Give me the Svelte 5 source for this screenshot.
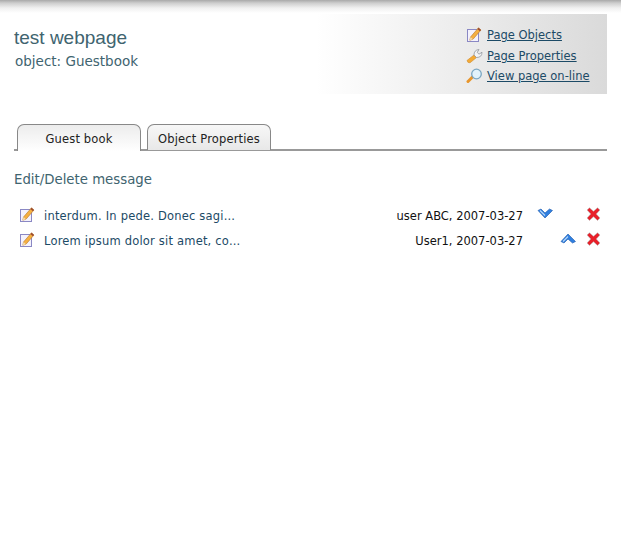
<script>
  let messages = [
    { text: 'interdum. In pede. Donec sagi...', by: 'user ABC, 2007-03-27', move: 'down' },
    { text: 'Lorem ipsum dolor sit amet, co...', by: 'User1, 2007-03-27', move: 'up' }
  ];
</script>

{#snippet pencil()}
  <svg class="icon" width="16" height="16" viewBox="0 0 16 16">
    <rect x="1.5" y="2.5" width="11" height="12" fill="#f4f2fc" stroke="#8a88c4" />
    <path d="M4.5 10 L12.5 0.8 L15 3 L7 12.2 L3.8 13.2 Z" fill="#f5b041" stroke="#b5762c" stroke-width="0.6" />
    <path d="M12.5 0.8 L15 3 L13.9 4.3 L11.4 2.1 Z" fill="#9a4a32" />
    <path d="M4.5 10 L7 12.2 L3.8 13.2 Z" fill="#f3dcb0" />
  </svg>
{/snippet}

{#snippet wrench()}
  <svg class="icon" width="17" height="16" viewBox="0 0 17 16">
    <path d="M1 12.5 L8 7 L10.5 9.5 L4 14.8 Q1.6 15.2 1 12.5 Z" fill="#f4aa35" stroke="#d08a28" stroke-width="0.6" />
    <path d="M8 7 Q8 2 13 1.5 L11.2 4.4 L13 6.2 L16 4.2 Q16 9.5 10.5 9.5 Z" fill="#f4f5f7" stroke="#8f949c" stroke-width="0.8" />
  </svg>
{/snippet}

{#snippet lens()}
  <svg class="icon" width="17" height="16" viewBox="0 0 17 16">
    <path d="M2 13.5 L6.5 9" stroke="#e8962c" stroke-width="3" stroke-linecap="round" />
    <circle cx="10.5" cy="6" r="4.8" fill="#e2f2fb" stroke="#7ba6c2" stroke-width="1.3" />
  </svg>
{/snippet}

{#snippet chevron(dir)}
  <svg class="chevron" width="16" height="11" viewBox="0 0 16 11">
    <path
      d={dir === 'down' ? 'M1 2.5 L4 1 L8 5 L12.5 1 L15.5 2.5 L8 10 Z' : 'M1 8.5 L4 10 L8 6 L12.5 10 L15.5 8.5 L8 1 Z'}
      fill="#2f7fe0" stroke="#1c57a8" stroke-width="0.6"
    />
    <path d={dir === 'down' ? 'M3 2.5 L8 7.5' : 'M3 8.5 L8 3.5'} stroke="#bcd9f8" stroke-width="1.1" />
  </svg>
{/snippet}

{#snippet cross()}
  <svg class="cross" width="15" height="14" viewBox="0 0 15 14">
    <path d="M1 3 L3.5 0.8 L7.5 4.2 L11.5 0.8 L14 3 L10.3 7 L14 11 L11.5 13.4 L7.5 9.8 L3.5 13.4 L1 11 L4.7 7 Z" fill="#e8202a" stroke="#b8c0c0" stroke-width="0.6" />
  </svg>
{/snippet}

<div class="shade"></div>

<header class="head">
  <div class="titles">
    <h1>test webpage</h1>
    <p>object: Guestbook</p>
  </div>
  <nav class="links">
    <div class="link-row">{@render pencil()}<a href="#objects">Page Objects</a></div>
    <div class="link-row">{@render wrench()}<a href="#properties">Page Properties</a></div>
    <div class="link-row">{@render lens()}<a href="#online">View page on-line</a></div>
  </nav>
</header>

<div class="tabs">
  <button class="tab active">Guest book</button>
  <button class="tab">Object Properties</button>
</div>

<h2>Edit/Delete message</h2>

<div class="list">
  {#each messages as m}
    <div class="row">
      {@render pencil()}
      <a class="msg" href="#msg">{m.text}</a>
      <span class="by">{m.by}</span>
      <span class="actions">
        <span class="slot" class:up={m.move === 'up'}>{@render chevron(m.move)}</span>
        {@render cross()}
      </span>
    </div>
  {/each}
</div>

<style>
  :global(body) {
    margin: 0;
    background: #fff;
    font-family: "DejaVu Sans", sans-serif;
    font-size: 11.5px;
  }
  .shade {
    height: 14px;
    background: linear-gradient(#a8a8a8 0, #cdcdcd 3px, #f0f0f0 8px, #fff 13px);
  }
  .head {
    display: flex;
    justify-content: space-between;
    height: 80px;
    margin: 0 14px;
    background: linear-gradient(90deg, #fff 51%, #dadada 100%);
  }
  .titles {
    padding-top: 13px;
    color: #40646f;
  }
  h1 {
    margin: 0;
    font: 19px/22px "Liberation Sans", sans-serif;
  }
  .titles p {
    margin: 3px 0 0 1px;
    font-size: 13.5px;
    line-height: 18px;
  }
  .links {
    width: 141px;
    padding-top: 11px;
  }
  .link-row {
    display: flex;
    align-items: center;
    gap: 5px;
    height: 20.5px;
  }
  .link-row a {
    color: #1c4a66;
    font-size: 11.5px;
  }
  .link-row:nth-child(n + 2) {
    gap: 4px;
  }
  .icon {
    flex: none;
  }
  .tabs {
    display: flex;
    gap: 6px;
    margin: 30px 14px 0;
    padding-left: 3px;
    height: 25px;
    border-bottom: 2px solid #999;
  }
  .tab {
    height: 26px;
    padding: 2px 0 0;
    width: 124px;
    border: 1px solid #888;
    border-bottom: 0;
    border-radius: 7px 7px 0 0;
    background: linear-gradient(#f7f7f7, #e8e8e8);
    font: inherit;
    letter-spacing: 0.15px;
    color: #222;
  }
  .tab.active {
    height: 27px;
    background: linear-gradient(#ececec, #fff);
  }
  h2 {
    margin: 20px 14px 0;
    font-size: 13.3px;
    font-weight: normal;
    line-height: 18px;
    color: #40646f;
  }
  .list {
    margin: 14px 20px 0 19px;
  }
  .row {
    display: flex;
    align-items: center;
    height: 25px;
  }
  .row .icon {
    margin-bottom: 2px;
  }
  .msg {
    margin-left: 9px;
    color: #1c4a66;
    text-decoration: none;
    letter-spacing: 0.2px;
  }
  .by {
    margin-left: auto;
    margin-right: 1px;
    color: #111;
  }
  .actions {
    display: flex;
    align-items: center;
    width: 64px;
    margin-bottom: 4px;
    margin-left: 13px;
    justify-content: space-between;
  }
  .slot {
    display: flex;
  }
  .slot.up {
    margin-left: auto;
    margin-right: 10px;
  }
</style>
